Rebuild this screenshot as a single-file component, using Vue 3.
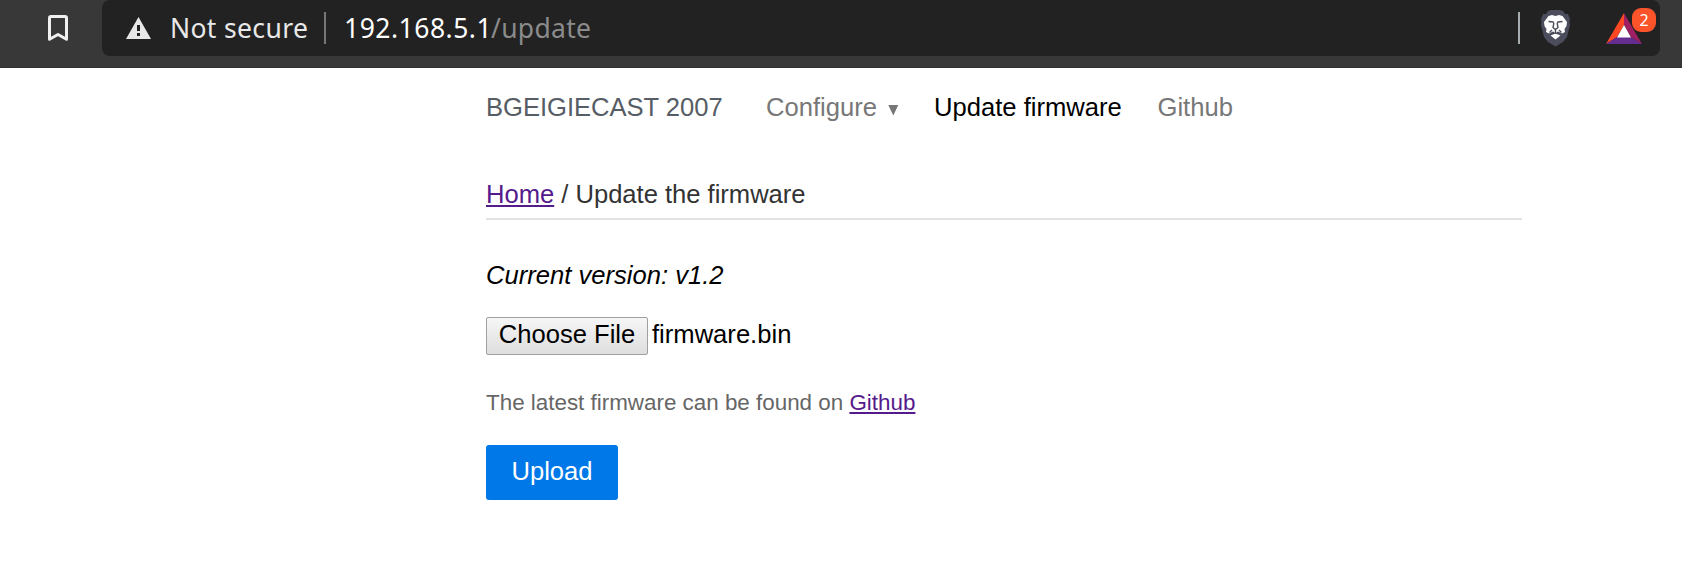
<script setup>
const host = '192.168.5.1'
const path = '/update'
</script>

<template>
  <div class="window">
    <header class="toolbar">
      <svg class="bookmark" width="22" height="28" viewBox="0 0 22 28">
        <path d="M4 2.5H18Q19.5 2.5 19.5 4V25.3L11 20.5L2.5 25.3V4Q2.5 2.5 4 2.5Z" fill="none" stroke="#f0f0f0" stroke-width="3" stroke-linejoin="round" />
      </svg>
      <div class="address">
        <svg class="warning" width="25" height="22" viewBox="0 0 25 22">
          <path fill-rule="evenodd" d="M12.5 0L25 22H0ZM11 8V14H14V8ZM11 16V19H14V16Z" fill="#e8e8e8" />
        </svg>
        <span class="security">Not secure</span>
        <i class="divider"></i>
        <span class="host">{{ host }}</span><span class="path">{{ path }}</span>
        <i class="divider right"></i>
        <svg class="shield" width="31" height="37" viewBox="0 0 31 37">
          <path d="M8 1L11 0H20L23 1L25 4L28 4L30 9L29.5 12L30 15L27 27L23 32L15.5 36.5L8 32L4 27L1 15L1.5 12L1 9L3 4L6 4Z" fill="#4b4c5c" />
          <path d="M8.5 6L12 5L15.5 6L19 5L22.5 6L27 12L26.5 16L24.5 19L25 22L22 23.5L18 21.5L15.5 23L13 21.5L9 23.5L6 22L6.500 19L4.500 16L4 12Z" fill="#fff" />
          <path d="M10.500 25.500L15.500 23.500L20.500 25.500L15.500 29.500Z" fill="#fff" />
          <path d="M8.500 11.500L13 12L13.800 13.500L13 17.500L15.500 19.500L18 17.500L17.200 13.500L18 12L22.500 11.500M15.500 19.500V24M12 20L9.500 22.500M19 20L21.500 22.500" fill="none" stroke="#4b4c5c" stroke-width="1.400" />
        </svg>
        <div class="rewards">
          <svg width="36" height="31" viewBox="0 0 36 31">
            <path d="M18 0V12L11 24L0 31Z" fill="#ff4724" />
            <path d="M18 0L36 31L25 24L18 12Z" fill="#9e1f63" />
            <path d="M0 31L11 24H25L36 31Z" fill="#662d91" />
            <path d="M18 12L25 24.5H11Z" fill="#fff" />
          </svg>
          <span class="badge">2</span>
        </div>
      </div>
    </header>
    <main class="page">
      <nav class="menu">
        <a class="brand">BGEIGIECAST 2007</a>
        <a class="configure">Configure
          <svg width="11" height="11" viewBox="0 0 11 11"><path d="M.3 0H10.3L5.3 10.5Z" fill="#777" /></svg>
        </a>
        <a class="current">Update firmware</a>
        <a>Github</a>
      </nav>
      <div class="crumbs"><a class="link">Home</a> / Update the firmware</div>
      <p class="version">Current version: v1.2</p>
      <div class="file"><button class="choose">Choose File</button><span>firmware.bin</span></div>
      <p class="hint">The latest firmware can be found on <a class="link">Github</a></p>
      <button class="upload">Upload</button>
    </main>
  </div>
</template>

<style>
body { margin: 0; background: #fff; }
</style>

<style scoped>
.window { height: 576px; overflow: hidden; background: #fff; font: 25.6px/30px "Liberation Sans", Arial, sans-serif; color: #000; }
.toolbar { box-sizing: border-box; height: 68px; display: flex; align-items: flex-start; background: #383838; border-bottom: 1px solid #303030; font-family: "Noto Sans", sans-serif; }
.bookmark { flex: none; margin: 14px 33px 0 47px; }
.address { box-sizing: border-box; width: 1558px; height: 56px; display: flex; align-items: center; padding-left: 24px; background: #222; border-radius: 8px; font-size: 26.5px; white-space: pre; }
.warning { margin-right: 19px; }
.security { width: 154px; color: #e8e8e8; letter-spacing: .35px; }
.divider { width: 2px; height: 32px; background: #777; margin-right: 18px; }
.host { width: 147px; color: #fff; letter-spacing: .5px; }
.path { color: #8b8b8b; letter-spacing: .3px; }
.divider.right { margin: 0 20px 0 auto; background: #a5adb0; }
.shield { flex: none; margin-right: 35px; }
.rewards { position: relative; width: 54px; height: 31px; display: flex; }
.badge { position: absolute; left: 26px; top: -5px; width: 24px; height: 24px; border-radius: 9px; background: #fb542b; color: #fff; font-size: 16px; line-height: 25px; text-align: center; }
.page { width: 1036px; margin-left: 486px; padding-top: 24px; }
.menu { display: flex; height: 30px; color: #777; white-space: nowrap; }
.brand { width: 280px; color: #565d64; letter-spacing: -.03px; }
.configure { width: 168px; }
.configure svg { margin-left: 3.5px; }
.current { width: 223.5px; color: #000; }
.crumbs { height: 39px; margin-top: 57px; border-bottom: 2px solid #e3e3e3; color: #333; letter-spacing: -.02px; }
.link { color: #551a8b; text-decoration: underline; }
.version { margin: 40px 0 0; font-style: italic; }
.file { display: flex; margin-top: 27px; height: 38px; line-height: 34px; gap: 4px; }
.choose { box-sizing: border-box; width: 162px; height: 38px; padding: 0 0 4px; border: 1px solid #a0a0a0; border-radius: 2px; background: linear-gradient(#f6f6f6, #dedede); font: inherit; line-height: 30px; color: #000; }
.hint { margin: 33px 0 0; font-size: 22.4px; color: #666; }
.upload { display: block; width: 132px; height: 55px; margin-top: 27px; padding: 0 0 4px; border: 0; border-radius: 3px; background: #0078e7; color: #fff; font: inherit; }
</style>
